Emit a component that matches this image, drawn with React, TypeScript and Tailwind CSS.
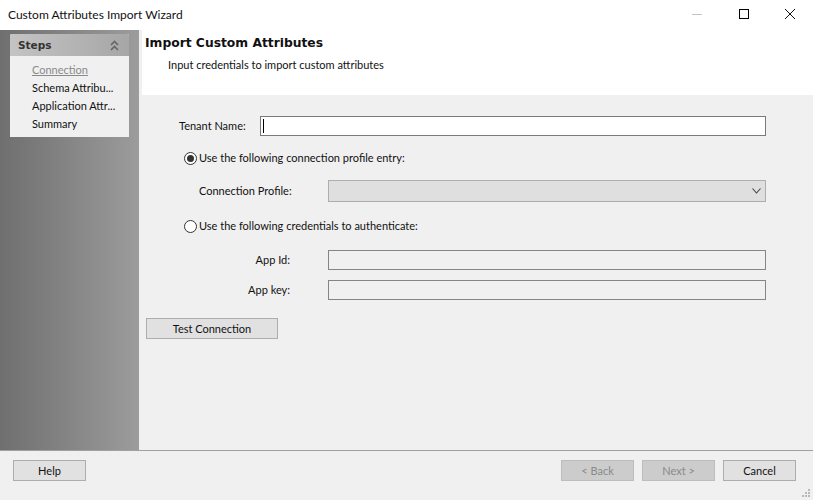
const uiFont = "font-['Lato',sans-serif] text-[11px] leading-[16px] text-[#111]";
const boldFont = "font-['DejaVu_Sans',sans-serif] font-bold";

function WindowButtons() {
  return (
    <div className="flex items-center">
      <svg width="46" height="30" viewBox="0 0 46 30">
        <path d="M17 14.500h10" stroke="#c4c4c4" strokeWidth="1" />
      </svg>
      <svg width="46" height="30" viewBox="0 0 46 30">
        <rect x="18.500" y="9.500" width="9" height="9" fill="none" stroke="#000" strokeWidth="1" />
      </svg>
      <svg width="46" height="30" viewBox="0 0 46 30">
        <path d="M18 9l10 10M28 9l-10 10" stroke="#111" strokeWidth="1" />
      </svg>
    </div>
  );
}

function StepsPanel() {
  return (
    <div className="w-[119px] overflow-hidden rounded-t-[2px] bg-[#f0f0f0]">
      <div className="flex h-[22px] items-center justify-between bg-gradient-to-r from-[#c4c4c4] to-[#a6a6a6] pl-2 pr-[10px]">
        <span className={`${boldFont} text-[10.500px] text-[#333]`}>Steps</span>
        <svg width="9" height="11" viewBox="0 0 9 11">
          <path d="M1 5l3.500-3.500L8 5M1 10l3.500-3.500L8 10" fill="none" stroke="#666" strokeWidth="1.6" />
        </svg>
      </div>
      <ul className="flex flex-col gap-[2px] pb-[5px] pl-[22px] pt-[6px]">
        <li className="h-4 text-[#8a8a8a] underline">Connection</li>
        <li className="h-4 whitespace-nowrap">Schema Attribu...</li>
        <li className="h-4 whitespace-nowrap">Application Attr...</li>
        <li className="h-4">Summary</li>
      </ul>
    </div>
  );
}

function Radio({ checked }: { checked: boolean }) {
  return (
    <span className="flex h-[13px] w-[13px] flex-none items-center justify-center rounded-full border border-[#333] bg-white">
      {checked && <span className="h-[7px] w-[7px] rounded-full bg-[#333]" />}
    </span>
  );
}

function WizardButton({ label, disabled, className = "" }: { label: string; disabled?: boolean; className?: string }) {
  return (
    <button
      type="button"
      className={`flex h-[21px] items-center justify-center border ${
        disabled ? "border-[#bdbdbd] bg-[#cccccc] text-[#8a8a8a]" : "border-[#adadad] bg-[#e1e1e1]"
      } ${className}`}
    >
      {label}
    </button>
  );
}

function CredentialRow({ label }: { label: string }) {
  return (
    <div className="flex items-center">
      <span className="w-[111px] text-right">{label}</span>
      <div className="ml-[38px] h-5 w-[438px] border border-[#858585] bg-[#f0f0f0]" />
    </div>
  );
}

export default function App() {
  return (
    <div className={`flex h-[500px] w-[813px] flex-col overflow-hidden bg-[#f0f0f0] ${uiFont}`}>
      <div className="flex h-[30px] flex-none items-center justify-between bg-white pl-2">
        <span className="text-[12px]">Custom Attributes Import Wizard</span>
        <WindowButtons />
      </div>

      <div className="flex min-h-0 flex-1">
        <aside className="w-[139px] flex-none bg-gradient-to-r from-[#6f6f6f] to-[#9c9c9c] pl-[10px] pt-1">
          <StepsPanel />
        </aside>

        <main className="min-w-0 flex-1">
          <div className="ml-[3px] h-[65px] bg-white pl-[3px] pt-[5px]">
            <h1 className={`${boldFont} text-[12.300px] leading-[17px] text-[#111]`}>Import Custom Attributes</h1>
            <p className="ml-[23px] mt-[5px]">Input credentials to import custom attributes</p>
          </div>

          <div className="pl-[40px] pt-[21px]">
            <div className="flex items-center">
              <span className="w-[81px]">Tenant Name:</span>
              <div className="flex h-[20px] w-[506px] items-center border border-[#7a7a7a] bg-white pl-[2px]">
                <span className="h-[14px] w-px bg-black" />
              </div>
            </div>

            <label className="ml-[5px] mt-[14px] flex items-center gap-[2px]">
              <Radio checked />
              <span>Use the following connection profile entry:</span>
            </label>

            <div className="ml-[20px] mt-[14px] flex items-center">
              <span className="w-[129px]">Connection Profile:</span>
              <div className="flex h-[22px] w-[438px] items-center justify-end border border-[#adadad] bg-[#dfdfdf] pr-[4px]">
                <svg width="9" height="6" viewBox="0 0 9 6">
                  <path d="M.5.5L4.500 5l4-4.500" fill="none" stroke="#444" strokeWidth="1.1" />
                </svg>
              </div>
            </div>

            <label className="ml-[5px] mt-[16px] flex items-center gap-[2px]">
              <Radio checked={false} />
              <span>Use the following credentials to authenticate:</span>
            </label>

            <div className="mt-[16px] flex flex-col gap-[10px]">
              <CredentialRow label="App Id:" />
              <CredentialRow label="App key:" />
            </div>

            <WizardButton label="Test Connection" className="-ml-[33px] mt-[18px] w-[132px]" />
          </div>
        </main>
      </div>

      <footer className="relative flex h-[50px] flex-none items-start justify-between border-t border-[#a0a0a0] pl-[13px] pr-[17px] pt-[9px]">
        <WizardButton label="Help" className="w-[73px]" />
        <div className="flex gap-2">
          <WizardButton label="< Back" disabled className="w-[73px]" />
          <WizardButton label="Next >" disabled className="w-[73px]" />
          <WizardButton label="Cancel" className="w-[73px]" />
        </div>
        <svg width="10" height="10" viewBox="0 0 10 10" className="absolute bottom-[2px] right-[2px]">
          <path d="M7 1h2v2H7zM4 4h2v2H4zM7 4h2v2H7zM1 7h2v2H1zM4 7h2v2H4zM7 7h2v2H7z" fill="#b8b8b8" />
        </svg>
      </footer>
    </div>
  );
}
